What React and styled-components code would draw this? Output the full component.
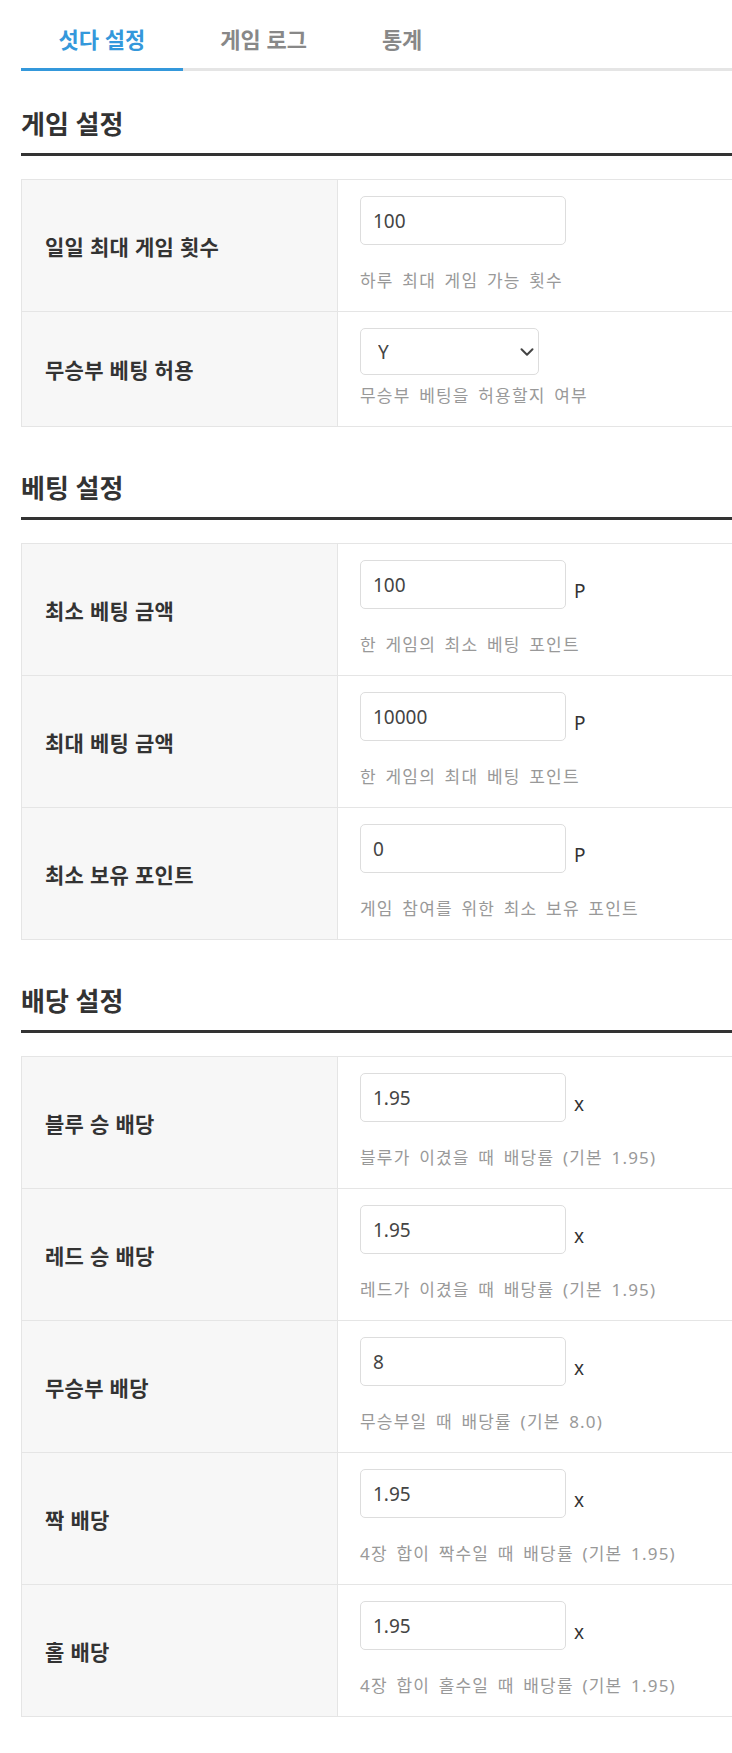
import React from 'react';
import styled, { createGlobalStyle } from 'styled-components';
import { ChevronDown } from 'lucide-react';

const GlobalStyle = createGlobalStyle`
  html, body { margin: 0; padding: 0; background: #fff; }
  body {
    font-family: "Noto Sans", "Noto Sans CJK KR", sans-serif;
    color: #333;
  }
  * { box-sizing: border-box; }
`;

const Page = styled.div`
  width: 100%;
  overflow: hidden;
  padding-bottom: 39px;
`;

const Inner = styled.div`
  width: 820px;
  padding: 10px 0 0 21px;
`;

const TabBar = styled.div`
  display: flex;
  border-bottom: 3px solid #e5e5e5;
`;

const Tab = styled.button`
  appearance: none;
  background: none;
  border: none;
  border-bottom: 3px solid ${p => (p.$active ? '#3498db' : 'transparent')};
  margin-bottom: -3px;
  padding: 14px 37.5px 14px;
  font-family: inherit;
  font-size: 22px;
  line-height: 30px;
  font-weight: 700;
  color: ${p => (p.$active ? '#3498db' : '#888')};
  cursor: pointer;
`;

const Sections = styled.div`
  display: flex;
  flex-direction: column;
  gap: 43px;
  padding-top: 35px;
`;

const Section = styled.section``;

const SectionTitle = styled.h2`
  margin: 0 0 23px;
  padding-bottom: 11px;
  border-bottom: 3px solid #333;
  font-size: 26px;
  line-height: 36px;
  font-weight: 700;
  color: #333;
`;

const Table = styled.table`
  width: 100%;
  border-collapse: collapse;
  border: 1px solid #e5e5e5;
`;

const Th = styled.th`
  width: 316px;
  padding: 0 20px 0 23px;
  background: #f7f7f7;
  border: 1px solid #e5e5e5;
  text-align: left;
  vertical-align: middle;
  font-size: 21px;
  letter-spacing: 0.3px;
  font-weight: 700;
  color: #333;
`;

const Td = styled.td`
  padding: 16px 20px 18px 22px;
  border: 1px solid #e5e5e5;
  vertical-align: top;
`;

const FieldLine = styled.div`
  display: flex;
  align-items: center;
  margin-bottom: ${p => (p.$select ? '9px' : '24px')};
`;

const TextInput = styled.input`
  width: 206px;
  height: 49px;
  padding: 0 12px;
  border: 1px solid #ddd;
  border-radius: 5px;
  font-family: inherit;
  font-size: 19px;
  color: #444;
  background: #fff;
  outline: none;
`;

const Unit = styled.span`
  margin-left: 8px;
  padding-top: 12px;
  font-size: 19px;
  line-height: 24px;
  color: #333;
`;

const SelectWrap = styled.div`
  position: relative;
  width: 179px;
  height: 47px;
`;

const Select = styled.select`
  appearance: none;
  width: 100%;
  height: 100%;
  padding: 0 36px 0 17px;
  border: 1px solid #ddd;
  border-radius: 5px;
  background: #fff;
  font-family: inherit;
  font-size: 19px;
  color: #444;
  outline: none;
`;

const Chevron = styled(ChevronDown)`
  position: absolute;
  right: 1.5px;
  top: 50%;
  transform: translateY(-50%);
  pointer-events: none;
  color: #444;
`;

const Desc = styled.p`
  margin: 0;
  font-size: 17px;
  letter-spacing: 1.2px;
  word-spacing: 3px;
  line-height: 24px;
  color: #999;
`;

const sections = [
  {
    title: '게임 설정',
    rows: [
      { label: '일일 최대 게임 횟수', value: '100', desc: '하루 최대 게임 가능 횟수' },
      { label: '무승부 베팅 허용', select: true, value: 'Y', desc: '무승부 베팅을 허용할지 여부' },
    ],
  },
  {
    title: '베팅 설정',
    rows: [
      { label: '최소 베팅 금액', value: '100', unit: 'P', desc: '한 게임의 최소 베팅 포인트' },
      { label: '최대 베팅 금액', value: '10000', unit: 'P', desc: '한 게임의 최대 베팅 포인트' },
      { label: '최소 보유 포인트', value: '0', unit: 'P', desc: '게임 참여를 위한 최소 보유 포인트' },
    ],
  },
  {
    title: '배당 설정',
    rows: [
      { label: '블루 승 배당', value: '1.95', unit: 'x', desc: '블루가 이겼을 때 배당률 (기본 1.95)' },
      { label: '레드 승 배당', value: '1.95', unit: 'x', desc: '레드가 이겼을 때 배당률 (기본 1.95)' },
      { label: '무승부 배당', value: '8', unit: 'x', desc: '무승부일 때 배당률 (기본 8.0)' },
      { label: '짝 배당', value: '1.95', unit: 'x', desc: '4장 합이 짝수일 때 배당률 (기본 1.95)' },
      { label: '홀 배당', value: '1.95', unit: 'x', desc: '4장 합이 홀수일 때 배당률 (기본 1.95)' },
    ],
  },
];

const tabs = ['섯다 설정', '게임 로그', '통계'];

export default function App() {
  const [active, setActive] = React.useState(0);
  return (
    <Page>
      <GlobalStyle />
      <Inner>
        <TabBar>
          {tabs.map((t, i) => (
            <Tab key={t} $active={i === active} onClick={() => setActive(i)}>
              {t}
            </Tab>
          ))}
        </TabBar>
        <Sections>
          {sections.map(s => (
            <Section key={s.title}>
              <SectionTitle>{s.title}</SectionTitle>
              <Table>
                <tbody>
                  {s.rows.map(r => (
                    <tr key={r.label}>
                      <Th scope="row">{r.label}</Th>
                      <Td>
                        <FieldLine $select={r.select}>
                          {r.select ? (
                            <SelectWrap>
                              <Select defaultValue={r.value}>
                                <option value="Y">Y</option>
                                <option value="N">N</option>
                              </Select>
                              <Chevron size={22} strokeWidth={2.2} />
                            </SelectWrap>
                          ) : (
                            <TextInput type="text" defaultValue={r.value} />
                          )}
                          {r.unit && <Unit>{r.unit}</Unit>}
                        </FieldLine>
                        <Desc>{r.desc}</Desc>
                      </Td>
                    </tr>
                  ))}
                </tbody>
              </Table>
            </Section>
          ))}
        </Sections>
      </Inner>
    </Page>
  );
}
